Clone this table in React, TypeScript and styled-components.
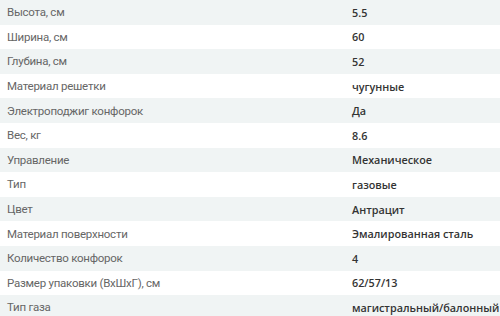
import React from 'react';
import styled, { createGlobalStyle } from 'styled-components';

const GlobalStyle = createGlobalStyle`
	html, body {
		margin: 0;
		padding: 0;
		background: #ffffff;
	}
`;

const specs: [string, string][] = [
	['Высота, см', '5.5'],
	['Ширина, см', '60'],
	['Глубина, см', '52'],
	['Материал решетки', 'чугунные'],
	['Электроподжиг конфорок', 'Да'],
	['Вес, кг', '8.6'],
	['Управление', 'Механическое'],
	['Тип', 'газовые'],
	['Цвет', 'Антрацит'],
	['Материал поверхности', 'Эмалированная сталь'],
	['Количество конфорок', '4'],
	['Размер упаковки (ВхШхГ), см', '62/57/13'],
	['Тип газа', 'магистральный/балонный']
];

const App = () => {
	return (
		<>
			<GlobalStyle />
			<SpecTable>
				{specs.map(([name, value], i) => (
					<SpecRow key={name} striped={i % 2 === 0}>
						<SpecName>{name}</SpecName>
						<SpecValue>{value}</SpecValue>
					</SpecRow>
				))}
			</SpecTable>
		</>
	);
};

export default App;

const SpecTable = styled.div`
	width: 500px;
	display: flex;
	flex-direction: column;
`;

const SpecRow = styled.div<{ striped: boolean }>`
	display: grid;
	grid-template-columns: 345px 1fr;
	align-items: center;
	height: 24.6px;
	padding-left: 7px;
	box-sizing: border-box;
	background: ${(props) => (props.striped ? '#f0f4f4' : '#ffffff')};
`;

const SpecName = styled.div`
	font-family: 'Roboto', sans-serif;
	font-size: 11.5px;
	letter-spacing: -0.25px;
	color: #666666;
	white-space: nowrap;
`;

const SpecValue = styled.div`
	font-family: 'Open Sans', sans-serif;
	font-weight: 600;
	font-size: 10.8px;
	color: #333333;
	white-space: nowrap;
`;
